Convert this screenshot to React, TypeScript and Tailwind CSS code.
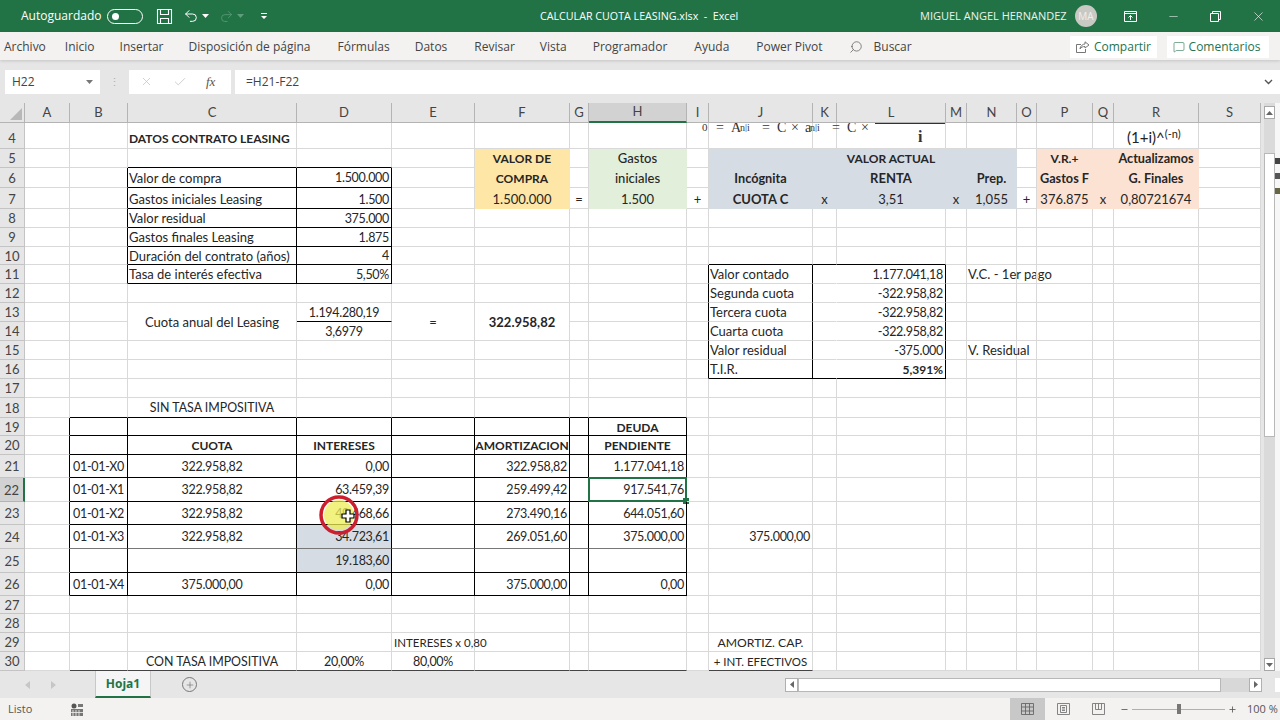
import { Fragment } from 'react';
import { Undo2, Redo2, Search, MessageSquare, X, Check, Minus, Plus } from 'lucide-react';

type Cell = { t?: string; c?: string; e?: string; fill?: string; hide?: boolean };

const cols = ['A', 'B', 'C', 'D', 'E', 'F', 'G', 'H', 'I', 'J', 'K', 'L', 'M', 'N', 'O', 'P', 'Q', 'R', 'S'];
const rows = Array.from({ length: 27 }, (_, i) => i + 4);

const LEFT = 'justify-start pl-[1px]';
const RIGHT = 'justify-end pr-[2px]';
const MID = 'justify-center';
const BOLD = 'justify-center font-bold text-[12px]';
const BOLD_LOWER = 'justify-center font-bold text-[12.7px]';
const NUM = 'text-[12.5px] tracking-[-0.3px]';
const PLAIN_NUMBERS = ['F7', 'H7', 'L7', 'N7', 'P7', 'R7', 'F13', 'L16'];

const cells: Record<string, Cell> = {};
const put = (ref: string, t: string, c = MID) => {
  const isNum = /^[-\dX.,%]+$/.test(t) && !PLAIN_NUMBERS.includes(ref);
  cells[ref] = { ...cells[ref], t, c: isNum ? c + ' ' + NUM : c };
};
const range = (c1: string, r1: number, c2: string, r2: number) => {
  const out: string[] = [];
  for (let i = cols.indexOf(c1); i <= cols.indexOf(c2); i++) {
    for (let r = r1; r <= r2; r++) out.push(cols[i] + r);
  }
  return out;
};
const edge = (refs: string[], cls: string) => {
  refs.forEach((r) => {
    cells[r] = { ...cells[r], e: ((cells[r]?.e || '') + ' ' + cls).trim() };
  });
};
const paint = (refs: string[], fill: string) => {
  refs.forEach((r) => {
    cells[r] = { ...cells[r], fill };
  });
};

// fills
paint(range('F', 5, 'F', 7), 'bg-[#fde6a6] border-[#fde6a6]');
paint(range('H', 5, 'H', 7), 'bg-[#e2efda] border-[#e2efda]');
paint(range('J', 5, 'N', 7), 'bg-[#d6dce4] border-[#d6dce4]');
paint(range('P', 5, 'R', 7), 'bg-[#fbe2d3] border-[#fbe2d3]');
paint(range('D', 24, 'D', 25), 'bg-[#d6dce4]');

// borders of the data box
edge(range('B', 6, 'B', 11), 'border-r-black');
edge(range('C', 5, 'D', 5), 'border-b-black');
edge(range('C', 6, 'D', 11), 'border-r-black border-b-black');
edge(['D13'], 'border-b-black');

// right hand box
edge(range('I', 11, 'I', 16), 'border-r-black');
edge(range('J', 10, 'L', 10), 'border-b-black');
edge(range('J', 11, 'J', 16), 'border-r-black');
edge(range('K', 11, 'K', 16), 'border-r-transparent');
edge(range('L', 11, 'L', 16), 'border-r-black');
edge(range('J', 16, 'L', 16), 'border-b-black');

// amortization table
edge(range('A', 19, 'A', 26), 'border-r-black');
edge(range('B', 18, 'H', 18), 'border-b-black');
edge(range('B', 19, 'H', 23), 'border-r-black border-b-black');
edge(range('B', 24, 'H', 24), 'border-r-black border-b-[#777777]');
edge(range('B', 25, 'H', 26), 'border-r-black border-b-black');

edge(range('B', 30, 'H', 30), 'border-b-[#444444]');
edge(['J30'], 'border-b-[#444444]');

// merged cells
['C', 'E', 'F'].forEach((c) => {
  cells[c + '14'] = { hide: true };
});

put('C4', 'DATOS CONTRATO LEASING', 'justify-start pl-[1px] font-bold text-[12px]');
put('F5', 'VALOR DE', BOLD);
put('H5', 'Gastos', MID + ' font-medium');
put('L5', 'VALOR ACTUAL', BOLD);
put('P5', 'V.R.+', BOLD);
put('R5', 'Actualizamos', BOLD_LOWER);
put('C6', 'Valor de compra', LEFT);
put('D6', '1.500.000', RIGHT);
put('F6', 'COMPRA', BOLD);
put('H6', 'iniciales', MID + ' font-medium');
put('J6', 'Incógnita', BOLD_LOWER);
put('L6', 'RENTA', MID + ' font-bold');
put('N6', 'Prep.', BOLD_LOWER);
put('P6', 'Gastos F', BOLD_LOWER);
put('R6', 'G. Finales', BOLD_LOWER);
put('C7', 'Gastos iniciales Leasing', LEFT);
put('D7', '1.500', RIGHT);
put('F7', '1.500.000');
put('G7', '=');
put('H7', '1.500');
put('I7', '+');
put('J7', 'CUOTA C', MID + ' font-bold');
put('K7', 'x');
put('L7', '3,51');
put('M7', 'x');
put('N7', '1,055');
put('O7', '+');
put('P7', '376.875');
put('Q7', 'x');
put('R7', '0,80721674');
put('C8', 'Valor residual', LEFT);
put('D8', '375.000', RIGHT);
put('C9', 'Gastos finales Leasing', LEFT);
put('D9', '1.875', RIGHT);
put('C10', 'Duración del contrato (años)', LEFT);
put('D10', '4', RIGHT);
put('C11', 'Tasa de interés efectiva', LEFT);
put('D11', '5,50%', RIGHT);

put('J11', 'Valor contado', LEFT);
put('L11', '1.177.041,18', RIGHT);
put('N11', 'V.C. - 1er pago', LEFT);
put('J12', 'Segunda cuota', LEFT);
put('L12', '-322.958,82', RIGHT);
put('J13', 'Tercera cuota', LEFT);
put('L13', '-322.958,82', RIGHT);
put('J14', 'Cuarta cuota', LEFT);
put('L14', '-322.958,82', RIGHT);
put('J15', 'Valor residual', LEFT);
put('L15', '-375.000', RIGHT);
put('N15', 'V. Residual', LEFT);
put('J16', 'T.I.R.', LEFT);
put('L16', '5,391%', RIGHT + ' font-bold text-[12px]');

put('C13', 'Cuota anual del Leasing', MID + ' row-span-2');
put('D13', '1.194.280,19');
put('D14', '3,6979');
put('E13', '=', MID + ' row-span-2');
put('F13', '322.958,82', 'justify-center font-bold row-span-2');

put('C18', 'SIN TASA IMPOSITIVA', MID + ' text-[12.4px]');
put('H19', 'DEUDA', BOLD);
put('C20', 'CUOTA', BOLD);
put('D20', 'INTERESES', BOLD);
put('F20', 'AMORTIZACION', BOLD);
put('H20', 'PENDIENTE', BOLD);

put('B21', '01-01-X0');
put('C21', '322.958,82');
put('D21', '0,00', RIGHT);
put('F21', '322.958,82', RIGHT);
put('H21', '1.177.041,18', RIGHT);
put('B22', '01-01-X1');
put('C22', '322.958,82');
put('D22', '63.459,39', RIGHT);
put('F22', '259.499,42', RIGHT);
put('H22', '917.541,76', RIGHT);
put('B23', '01-01-X2');
put('C23', '322.958,82');
put('D23', '49.468,66', RIGHT);
put('F23', '273.490,16', RIGHT);
put('H23', '644.051,60', RIGHT);
put('B24', '01-01-X3');
put('C24', '322.958,82');
put('D24', '34.723,61', RIGHT);
put('F24', '269.051,60', RIGHT);
put('H24', '375.000,00', RIGHT);
put('J24', '375.000,00', RIGHT);
put('D25', '19.183,60', RIGHT);
put('B26', '01-01-X4');
put('C26', '375.000,00');
put('D26', '0,00', RIGHT);
put('F26', '375.000,00', RIGHT);
put('H26', '0,00', RIGHT);

put('E29', 'INTERESES x 0,80', 'justify-start pl-[2px] text-[11.5px]');
put('J29', 'AMORTIZ. CAP.', MID + ' text-[12.2px]');
put('C30', 'CON TASA IMPOSITIVA', MID + ' text-[12.4px]');
put('D30', '20,00%');
put('E30', '80,00%');
put('J30', '+ INT. EFECTIVOS', MID + ' text-[11.5px]');

const tabs = [
  ['Archivo', 'mr-[19px]'],
  ['Inicio', 'mr-[25px]'],
  ['Insertar', 'mr-[25px]'],
  ['Disposición de página', 'mr-[27px]'],
  ['Fórmulas', 'mr-[25px]'],
  ['Datos', 'mr-[27px]'],
  ['Revisar', 'mr-[25px]'],
  ['Vista', 'mr-[26px]'],
  ['Programador', 'mr-[27px]'],
  ['Ayuda', 'mr-[27px]'],
  ['Power Pivot', 'mr-[26px]'],
];

const rowPad = (r: number) => (r === 4 ? 'pt-[6px]' : r === 7 ? 'pt-[4px]' : 'pt-[2px]');

const SmallCaret = ({ className }: { className: string }) => (
  <svg width="7" height="4" viewBox="0 0 7 4" className={className}>
    <path d="M0 0h7L3.5 4z" fill="currentColor" />
  </svg>
);

const TitleBar = () => (
  <div className="flex h-[32px] items-center whitespace-nowrap bg-[#217346] text-[12px] text-white">
    <div className="flex w-[540px] shrink-0 items-center">
      <span className="ml-[21px]">Autoguardado</span>
      <div className="ml-[6px] flex h-[15px] w-[36px] items-center rounded-full border border-white pl-[4px]">
        <div className="h-[7px] w-[7px] rounded-full bg-white" />
      </div>
      <svg width="17" height="17" viewBox="0 0 17 17" fill="none" stroke="white" strokeWidth="1.1" className="ml-[13px]">
        <path d="M1.5 1.5h14v14h-14z" />
        <path d="M4.5 1.5v5h8v-5M4.5 15.5v-5h8v5" />
      </svg>
      <Undo2 size={16} strokeWidth={1.5} className="ml-[10px]" />
      <SmallCaret className="ml-[3px] text-white" />
      <Redo2 size={15} strokeWidth={1.2} className="ml-[10px] text-[#5f9d7c]" />
      <SmallCaret className="ml-[3px] text-[#5f9d7c]" />
      <svg width="7" height="7" viewBox="0 0 7 7" className="ml-[17px]">
        <path d="M0 0h6v1H0zM0 3h6L3 6z" fill="white" />
      </svg>
    </div>
    <span className="w-[380px] shrink-0 text-[10.7px]">CALCULAR CUOTA LEASING.xlsx&nbsp; -&nbsp; Excel</span>
    <span className="w-[155px] shrink-0 text-[11px] text-[#eaf3ee]">MIGUEL ANGEL HERNANDEZ</span>
    <div className="flex h-[22px] w-[22px] shrink-0 items-center justify-center rounded-full bg-[#c9c9c4] text-[10px] text-[#eef0ec]">MA</div>
    <svg width="13" height="11" viewBox="0 0 13 11" fill="none" stroke="white" className="ml-[27px] shrink-0">
      <path d="M.5.5h12v10H.5zM.5 2.5h12M6.5 9V4.5M4.5 6.5l2-2 2 2" />
    </svg>
    <Minus size={13} strokeWidth={1} className="ml-[30px] shrink-0" />
    <svg width="11" height="11" viewBox="0 0 11 11" fill="none" stroke="white" className="ml-[30px] shrink-0">
      <path d="M.5 2.5h8v8h-8zM2.5 2.5v-2h8v8h-2" />
    </svg>
    <X size={15} strokeWidth={1} className="ml-[30px] shrink-0" />
  </div>
);

const RibbonTabs = () => (
  <div className="relative z-10 flex h-[28px] items-center bg-[#f3f2f1] pl-[4px] pt-[1px] text-[12px] text-[#444444] shadow-[0_1px_3px_rgba(0,0,0,0.15)]">
    {tabs.map(([name, gap]) => (
      <span key={name} className={gap}>{name}</span>
    ))}
    <Search size={14} strokeWidth={1.2} className="-scale-x-100 text-[#555555]" />
    <span className="ml-[11px]">Buscar</span>
    <div className="ml-auto flex h-[22px] w-[87px] items-center justify-center gap-[4px] bg-white text-[#26734d]">
      <svg width="14" height="12" viewBox="0 0 14 12" fill="none" stroke="#777777">
        <path d="M5 3.5H.5v8h9V8M4 8c0-3 3-5 5-5V.8L13 4 9 7V5.5C7 5.5 5 6 4 8z" />
      </svg>
      <span>Compartir</span>
    </div>
    <div className="ml-[10px] mr-[11px] flex h-[22px] w-[102px] items-center justify-center gap-[4px] bg-white pr-[3px] text-[#26734d]">
      <MessageSquare size={12} strokeWidth={1.2} className="text-[#26734d]" />
      <span>Comentarios</span>
    </div>
  </div>
);

const FormulaBar = () => (
  <div className="flex h-[43px] items-center bg-[#e6e6e6] text-[12px] text-[#444444]">
    <div className="ml-[5px] flex h-[24px] w-[95px] items-center justify-between bg-white pl-[7px] pr-[7px]">
      <span>H22</span>
      <SmallCaret className="text-[#777777]" />
    </div>
    <span className="ml-[9px] text-[11px] leading-none text-[#b0b0b0]">⋮</span>
    <div className="ml-[9px] flex h-[24px] w-[102px] items-center bg-white pl-[11px]">
      <X size={13} strokeWidth={1.4} className="text-[#c4c4c4]" />
      <Check size={14} strokeWidth={1.4} className="ml-[20px] text-[#c4c4c4]" />
      <span className="ml-[19px] font-['Liberation_Serif',serif] text-[13px] italic text-[#555555]">fx</span>
    </div>
    <div className="ml-[4px] flex h-[24px] flex-1 items-center justify-between bg-white pl-[11px] pr-[7px]">
      <span>=H21-F22</span>
      <svg width="9" height="6" viewBox="0 0 9 6" fill="none" stroke="#555555" strokeWidth="1.4">
        <path d="M1 1l3.5 3.5L8 1" />
      </svg>
    </div>
  </div>
);

const SheetGrid = () => (
  <div className="relative grid w-[1261px] grid-cols-[25px_45px_58px_169px_95px_83px_95px_19px_98px_22px_104px_24px_109px_21px_50px_20px_56px_21px_85px_62px] grid-rows-[20px_26px_19px_20px_21px_19px_19px_18px_19px_19px_19px_19px_19px_19px_19px_20px_18px_19px_23px_24px_23px_24px_24px_23px_18px_19px_19px_19px] bg-white font-['Lato',sans-serif] text-[13px] text-[#262626]">
    <div className="flex items-end justify-end border-r border-b border-[#b4b4b4] bg-[#e6e6e6] pb-[2px] pr-[2px]">
      <svg width="12" height="12" viewBox="0 0 12 12">
        <path d="M12 0v12H0z" fill="#b8b8b8" />
      </svg>
    </div>
    {cols.map((c) =>
      c === 'H' ? (
        <div key={c} className="flex items-center justify-center border-r border-b-2 border-r-[#b4b4b4] border-b-[#217346] bg-[#d2d2d2] text-[#444444]">{c}</div>
      ) : (
        <div key={c} className="flex items-center justify-center border-r border-b border-[#b4b4b4] bg-[#e6e6e6] text-[#444444]">{c}</div>
      ),
    )}
    {rows.map((r) => (
      <Fragment key={r}>
        {r === 22 ? (
          <div className="flex items-center justify-center border-r-2 border-b border-r-[#217346] border-b-[#b4b4b4] bg-[#d2d2d2] pt-[2px] text-[#444444]">{r}</div>
        ) : (
          <div className={`flex items-center justify-center border-r border-b border-[#c4c4c4] bg-[#e6e6e6] text-[#444444] ${rowPad(r)}`}>{r}</div>
        )}
        {cols.map((c) => {
          const ref = c + r;
          const cell = cells[ref];
          if (cell?.hide) return null;
          return (
            <div
              key={ref}
              className={`relative flex items-center whitespace-nowrap border-r border-b ${rowPad(r)} ${cell?.fill || 'border-[#d9d9d9]'} ${cell?.e || ''} ${cell?.c || ''}`}
            >
              {cell?.t}
              {ref === 'H22' && (
                <div className="absolute -left-[1px] -top-[1px] -right-[1px] -bottom-[1px] border-2 border-[#217346]">
                  <div className="absolute -bottom-[4px] -right-[4px] h-[6px] w-[6px] bg-[#217346]" />
                </div>
              )}
            </div>
          );
        })}
      </Fragment>
    ))}

    {/* equation picture over row 4 */}
    <div className="absolute left-[702px] top-[20px] flex h-[9px] items-end overflow-hidden font-['Liberation_Serif',serif] text-[14px] leading-[9px] text-[#333333]">
      <span className="w-[14px] text-[11px]">0</span>
      <span className="w-[15px]">=</span>
      <span className="w-[9px]">A</span>
      <span className="w-[22px] text-[10px]">n|i</span>
      <span className="w-[15px]">=</span>
      <span className="w-[14px]">C</span>
      <span className="w-[14px]">×</span>
      <span className="w-[5px]">a</span>
      <span className="w-[22px] text-[10px]">n|i</span>
      <span className="w-[15px]">=</span>
      <span className="w-[14px]">C</span>
      <span className="w-[10px]">×</span>
    </div>
    <div className="absolute left-[875px] top-[20px] h-[1px] w-[70px] bg-[#333333]" />
    <span className="absolute left-[918px] top-[22px] font-['Liberation_Serif',serif] text-[16px] font-bold text-[#333333]">i</span>
    <span className="absolute left-[1127px] top-[23px] text-[15px] text-[#222222]">
      (1+i)^<sup className="text-[11px]">(-n)</sup>
    </span>

    {/* click highlight and cursor */}
    <svg width="50" height="50" viewBox="0 0 50 50" className="absolute left-[314px] top-[387px]">
      <circle cx="25" cy="25" r="15" fill="#eeee55" fillOpacity="0.75" />
      <circle cx="25" cy="25" r="18" fill="none" stroke="#cc1f2d" strokeWidth="3.5" />
      <path d="M28 24h4v-4h4v4h4v4h-4v4h-4v-4h-4z" fill="white" stroke="black" strokeWidth="1.2" />
    </svg>
  </div>
);

const VScroll = () => (
  <div className="flex flex-1 bg-[#e6e6e6] pl-[3px]">
    <div className="flex w-[11px] flex-col bg-[#dadada]">
      <div className="mt-[3px] flex h-[13px] items-center justify-center border border-[#a8a8a8] bg-white">
        <svg width="7" height="4" viewBox="0 0 7 4"><path d="M3.5 0L7 4H0z" fill="#666666" /></svg>
      </div>
      <div className="mt-[34px] h-[284px] border border-[#b8b8b8] bg-white" />
      <div className="mt-auto flex h-[13px] items-center justify-center border border-[#a8a8a8] bg-white">
        <svg width="7" height="4" viewBox="0 0 7 4"><path d="M0 0h7L3.5 4z" fill="#666666" /></svg>
      </div>
    </div>
    <div className="flex flex-1 flex-col gap-[9px] bg-[#f7f7f7] pt-[55px]">
      <div className="h-[6px] bg-[#444444]" />
      <div className="h-[6px] bg-[#555555]" />
      <div className="h-[6px] bg-[#666644]" />
    </div>
  </div>
);

const SheetTabs = () => (
  <div className="flex h-[27px] items-center bg-[#e6e6e6] font-['Open_Sans',sans-serif]">
    <svg width="5" height="8" viewBox="0 0 5 8" className="ml-[25px]"><path d="M5 0v8L0 4z" fill="#c6c6c6" /></svg>
    <svg width="5" height="8" viewBox="0 0 5 8" className="ml-[21px]"><path d="M0 0v8l5-4z" fill="#c6c6c6" /></svg>
    <div className="ml-[39px] flex h-[27px] w-[56px] items-center justify-center border-x border-b-2 border-x-[#c8c8c8] border-b-[#217346] bg-[#f5f5f5] text-[12px] font-bold text-[#217346]">Hoja1</div>
    <div className="ml-[31px] flex h-[15px] w-[15px] items-center justify-center rounded-full border border-[#777777] text-[#666666]">
      <Plus size={10} strokeWidth={1.4} />
    </div>
    <div className="ml-[588px] flex h-[14px] w-[13px] items-center justify-center border border-[#b0b0b0] bg-white">
      <svg width="4" height="7" viewBox="0 0 4 7"><path d="M4 0v7L0 3.5z" fill="#666666" /></svg>
    </div>
    <div className="h-[14px] w-[423px] border border-[#b8b8b8] bg-white" />
    <div className="h-[14px] w-[28px] bg-[#d8d8d8]" />
    <div className="flex h-[14px] w-[13px] items-center justify-center border border-[#b0b0b0] bg-white">
      <svg width="4" height="7" viewBox="0 0 4 7"><path d="M0 0v7l4-3.5z" fill="#666666" /></svg>
    </div>
    <div className="ml-auto h-[14px] w-[5px] bg-white" />
  </div>
);

const StatusBar = () => (
  <div className="flex h-[22px] items-center whitespace-nowrap bg-[#f3f2f1] font-['Open_Sans',sans-serif] text-[11px] text-[#555555]">
    <span className="ml-[8px] w-[22px]">Listo</span>
    <svg width="12" height="13" viewBox="0 0 12 13" className="ml-[41px]">
      <circle cx="3" cy="3" r="2.5" fill="#555555" />
      <path d="M7 1h5v3H7zM0 6h12v7H0z" fill="#777777" />
      <path d="M2 7v6M5 7v6M8 7v6M0 9.5h12" stroke="#f3f2f1" strokeWidth="0.8" />
    </svg>
    <div className="ml-[927px] flex h-[22px] w-[35px] items-center justify-center bg-[#c8c8c8]">
      <svg width="13" height="12" viewBox="0 0 13 12" fill="none" stroke="#666666" strokeWidth="0.9">
        <path d="M.5.5h12v11H.5zM.5 4h12M.5 8h12M4.5.5v11M8.5.5v11" />
      </svg>
    </div>
    <svg width="13" height="12" viewBox="0 0 13 12" fill="none" stroke="#777777" strokeWidth="0.9" className="ml-[12px]">
      <path d="M.5.5h12v11H.5zM3.5 2.5h6v7h-6zM5 4.5h3M5 6h3M5 7.5h3" />
    </svg>
    <svg width="13" height="12" viewBox="0 0 13 12" fill="none" stroke="#777777" strokeWidth="0.9" className="ml-[22px]">
      <path d="M.5.5h12v11H.5zM3.5.5v6h6v-6M6.5.5v6" />
    </svg>
    <Minus size={9} strokeWidth={2.2} className="ml-[15px] text-[#555555]" />
    <div className="relative ml-[3px] flex h-[10px] w-[93px] items-center">
      <div className="h-[1px] w-full bg-[#b0b0b0]" />
      <div className="absolute left-[45px] h-[10px] w-[4px] bg-[#777777]" />
    </div>
    <Plus size={9} strokeWidth={2.2} className="ml-[3px] text-[#555555]" />
    <span className="ml-[10px]">100 %</span>
  </div>
);

export default function App() {
  return (
    <div className="flex h-[720px] w-[1280px] flex-col overflow-hidden bg-white font-['Open_Sans',sans-serif]">
      <TitleBar />
      <RibbonTabs />
      <FormulaBar />
      <div className="flex h-[568px]">
        <SheetGrid />
        <VScroll />
      </div>
      <SheetTabs />
      <StatusBar />
    </div>
  );
}
